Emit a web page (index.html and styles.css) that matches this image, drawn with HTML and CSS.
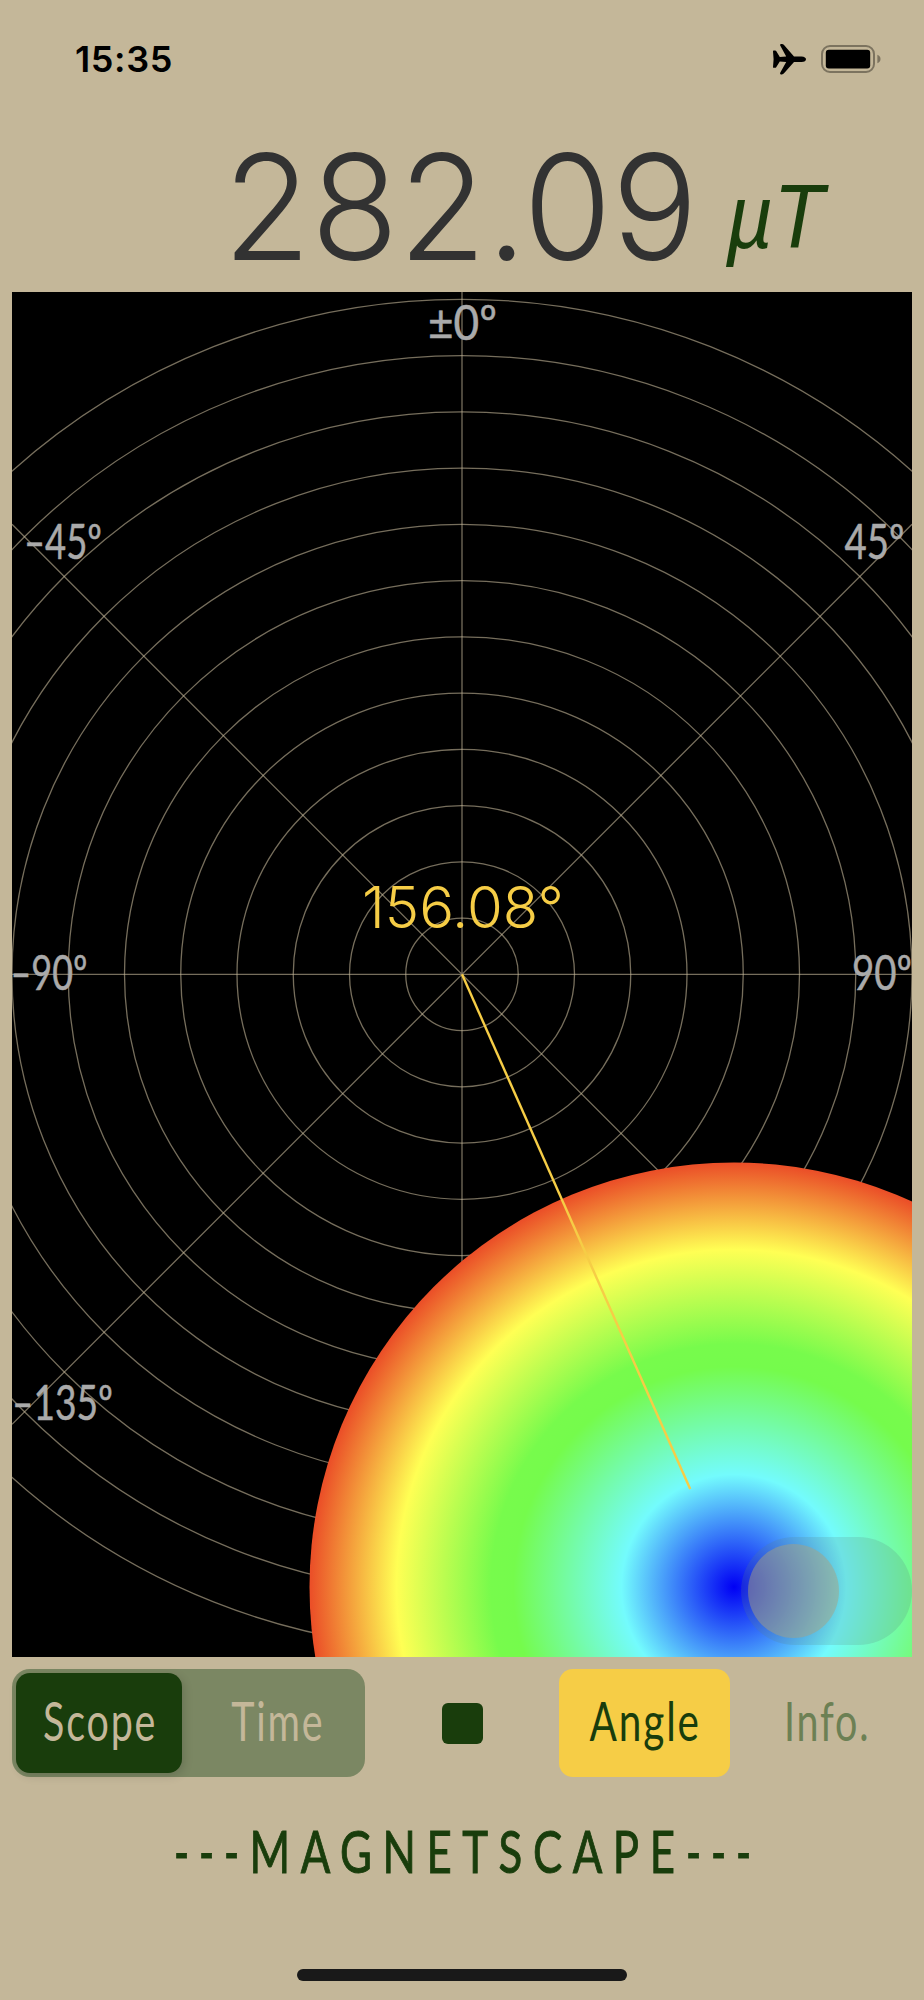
FILE: index.html
```html
<!DOCTYPE html>
<html lang="en">
<head>
    <meta charset="UTF-8">
    <title>Magnetscape</title>
    <meta name="viewport" content="width=device-width, initial-scale=1.0">

    <link rel="stylesheet" href="styles.css">
</head>
<body>

<div id="statusBar">
    <span class="time">15:35</span>
    <div class="statusIcons">
        <svg class="plane" viewBox="0 0 33 31">
            <path d="M0 7.2 Q0 6.6 .7 6.6 H2.2 Q2.8 6.6 3.2 7.1 L6.8 12.9 L13.2 12.5 L7.2 1.6 Q6.6 0 8 0 H9 Q10 0 10.8 .8 L21 12.4 H28.5 Q33 12.8 33 15.2 Q33 17.6 28.5 18 H21 L10.8 29.6 Q10 30.4 9 30.4 H8 Q6.6 30.4 7.2 28.8 L13.2 17.9 L6.8 17.5 L3.2 23.3 Q2.8 23.8 2.2 23.8 H.7 Q0 23.8 0 23.2 L.6 15.2 Z"/>
        </svg>
        <svg class="battery" viewBox="0 0 60 28">
            <rect class="shell" x="1" y="1" width="52" height="26" rx="8"/>
            <rect x="4.8" y="4.8" width="44.4" height="18.6" rx="3"/>
            <path class="nub" d="M56.4 9.8 Q59.5 11 59.5 14 Q59.5 17 56.4 18.2 Z"/>
        </svg>
    </div>
</div>

<svg id="reading" viewBox="0 0 924 192">
    <text class="value" x="223" y="159.5" textLength="475" lengthAdjust="spacingAndGlyphs">282.09</text>
    <text class="unit" x="726" y="148" textLength="98" lengthAdjust="spacingAndGlyphs">µT</text>
</svg>

<div id="scope">
    <svg class="plot" viewBox="12 292 900 1365">
        <defs>
            <radialGradient id="field" gradientUnits="userSpaceOnUse" cx="734" cy="1587" r="450">
                <stop offset="0" stop-color="#0000f5"/>
                <stop offset="0.25" stop-color="#73fbfd"/>
                <stop offset="0.49" stop-color="#75fb4c"/>
                <stop offset="0.54" stop-color="#77fb4c"/>
                <stop offset="0.75" stop-color="#ffff54"/>
                <stop offset="0.94" stop-color="#eb5028"/>
            </radialGradient>
        </defs>

        <g class="grid">
            <circle cx="462" cy="974.3" r="56.25"/>
            <circle cx="462" cy="974.3" r="112.5"/>
            <circle cx="462" cy="974.3" r="168.75"/>
            <circle cx="462" cy="974.3" r="225"/>
            <circle cx="462" cy="974.3" r="281.25"/>
            <circle cx="462" cy="974.3" r="337.5"/>
            <circle cx="462" cy="974.3" r="393.75"/>
            <circle cx="462" cy="974.3" r="450"/>
            <circle cx="462" cy="974.3" r="506.25"/>
            <circle cx="462" cy="974.3" r="562.5"/>
            <circle cx="462" cy="974.3" r="618.75"/>
            <circle cx="462" cy="974.3" r="675"/>
            <path d="M462 292V1658M12 974.3H912M12 524.3L912 1424.3M912 524.3L12 1424.3"/>
        </g>

        <g class="angles">
            <text x="428" y="339.5" textLength="69" lengthAdjust="spacingAndGlyphs">±0º</text>
            <text x="24" y="559" textLength="78" lengthAdjust="spacingAndGlyphs">–45º</text>
            <text x="844.5" y="559" textLength="60" lengthAdjust="spacingAndGlyphs">45º</text>
            <text x="10.5" y="989.5" textLength="77" lengthAdjust="spacingAndGlyphs">–90º</text>
            <text x="852" y="989.5" textLength="60" lengthAdjust="spacingAndGlyphs">90º</text>
            <text x="12" y="1420" textLength="101" lengthAdjust="spacingAndGlyphs">–135º</text>
        </g>

        <circle cx="734" cy="1587" r="424.5" fill="url(#field)"/>
        <path class="needle" d="M462 974.3L690.2 1489"/>
        <text class="heading" x="362" y="927.5" textLength="202" lengthAdjust="spacingAndGlyphs">156.08°</text>
    </svg>
    <div class="toggle"><div class="knob"></div></div>
</div>

<div id="controls">
    <div class="segments">
        <div class="segment selected"><span>Scope</span></div>
        <div class="segment time-segment"><span>Time</span></div>
    </div>
    <div class="stop"></div>
    <div class="angleButton"><span>Angle</span></div>
    <div class="infoButton"><span>Info.</span></div>
</div>

<svg id="brand" viewBox="0 0 924 192">
    <text x="174" y="96" textLength="75" lengthAdjust="spacingAndGlyphs">---</text>
    <text x="249.5" y="96" textLength="436" lengthAdjust="spacingAndGlyphs">MAGNETSCAPE</text>
    <text x="686" y="96" textLength="75" lengthAdjust="spacingAndGlyphs">---</text>
</svg>

<div id="homeBar"></div>

</body>
</html>
```
FILE: styles.css
```css
body {
    margin: 0;
    width: 924px;
    height: 2000px;
    background: #c4b799;
    color: #193d0c;
    font-family: Lato, sans-serif;
    overflow: hidden;
}

svg {
    display: block;
}

#statusBar {
    display: flex;
    justify-content: space-between;
    align-items: center;
    box-sizing: border-box;
    height: 100px;
    padding: 18px 43px 0 75px;
    color: #000000;
}

.time {
    font: 600 36px Inter, sans-serif;
    letter-spacing: 0.6px;
}

.statusIcons {
    display: flex;
    align-items: center;
    gap: 15px;
}

.plane {
    width: 33px;
    height: 31px;
}

.battery {
    width: 60px;
    height: 28px;
}

.shell {
    fill: none;
    stroke: #7c735f;
    stroke-width: 2;
}

.nub {
    fill: #7c735f;
}

#reading {
    width: 924px;
    height: 192px;
    overflow: visible;
}

.value {
    font: 300 147px Inter, sans-serif;
    fill: #323232;
}

.unit {
    font: italic 91px "Liberation Sans", sans-serif;
    fill: #193d0c;
}

#scope {
    position: relative;
    width: 900px;
    height: 1365px;
    margin: 0 12px;
    background: #000000;
}

.plot {
    width: 900px;
    height: 1365px;
}

.grid {
    fill: none;
    stroke: #c4b799;
    stroke-opacity: 0.6;
    stroke-width: 1.3;
}

.angles {
    font-size: 48px;
    fill: #aaaaaa;
    stroke: #aaaaaa;
    stroke-width: 0.5;
}

.needle {
    stroke: #f6cd46;
    stroke-width: 2.4;
}

.heading {
    font: 300 58px Inter, sans-serif;
    fill: #f6cd46;
}

.toggle {
    position: absolute;
    right: 0;
    bottom: 12px;
    box-sizing: border-box;
    width: 171px;
    height: 108px;
    padding: 7px;
    border-radius: 54px;
    background: rgba(90, 130, 130, 0.2);
}

.knob {
    width: 91px;
    height: 94px;
    border-radius: 50%;
    background: rgba(170, 160, 125, 0.48);
}

#controls {
    display: flex;
    align-items: center;
    height: 108px;
    margin: 12px 12px 0;
    font-size: 54px;
}

#controls span {
    display: block;
    margin-top: -5px;
    letter-spacing: 2.5px;
    transform: translateX(1px) scaleX(0.73);
}

.segments {
    display: flex;
    box-sizing: border-box;
    width: 353px;
    height: 108px;
    padding: 4px;
    border-radius: 18px;
    background: #7b8763;
    color: #c4b799;
}

.segment {
    flex: 1;
    display: flex;
    align-items: center;
    justify-content: center;
    border-radius: 14px;
}

.selected {
    flex: 0 0 166px;
    background: #193d0c;
    box-shadow: 2px 3px 10px rgba(0, 0, 0, 0.15);
}

.time-segment {
    padding-left: 11px;
}

.stop {
    width: 41px;
    height: 41px;
    margin: 0 76px 0 77px;
    border-radius: 6px;
    background: #193d0c;
}

.angleButton {
    display: flex;
    align-items: center;
    justify-content: center;
    width: 171px;
    height: 108px;
    border-radius: 14px;
    background: #f6cd46;
}

#controls .angleButton span {
    transform: translateX(1px) scaleX(0.75);
}

.infoButton {
    flex: 1;
    display: flex;
    justify-content: center;
    padding-left: 10px;
    color: #6c8054;
}

#brand {
    width: 924px;
    height: 192px;
    font-size: 58px;
    letter-spacing: 14px;
    fill: #193d0c;
    stroke: #193d0c;
    stroke-width: 1;
}

#homeBar {
    width: 330px;
    height: 12px;
    margin: 0 auto;
    border-radius: 6px;
    background: #191919;
}
```
